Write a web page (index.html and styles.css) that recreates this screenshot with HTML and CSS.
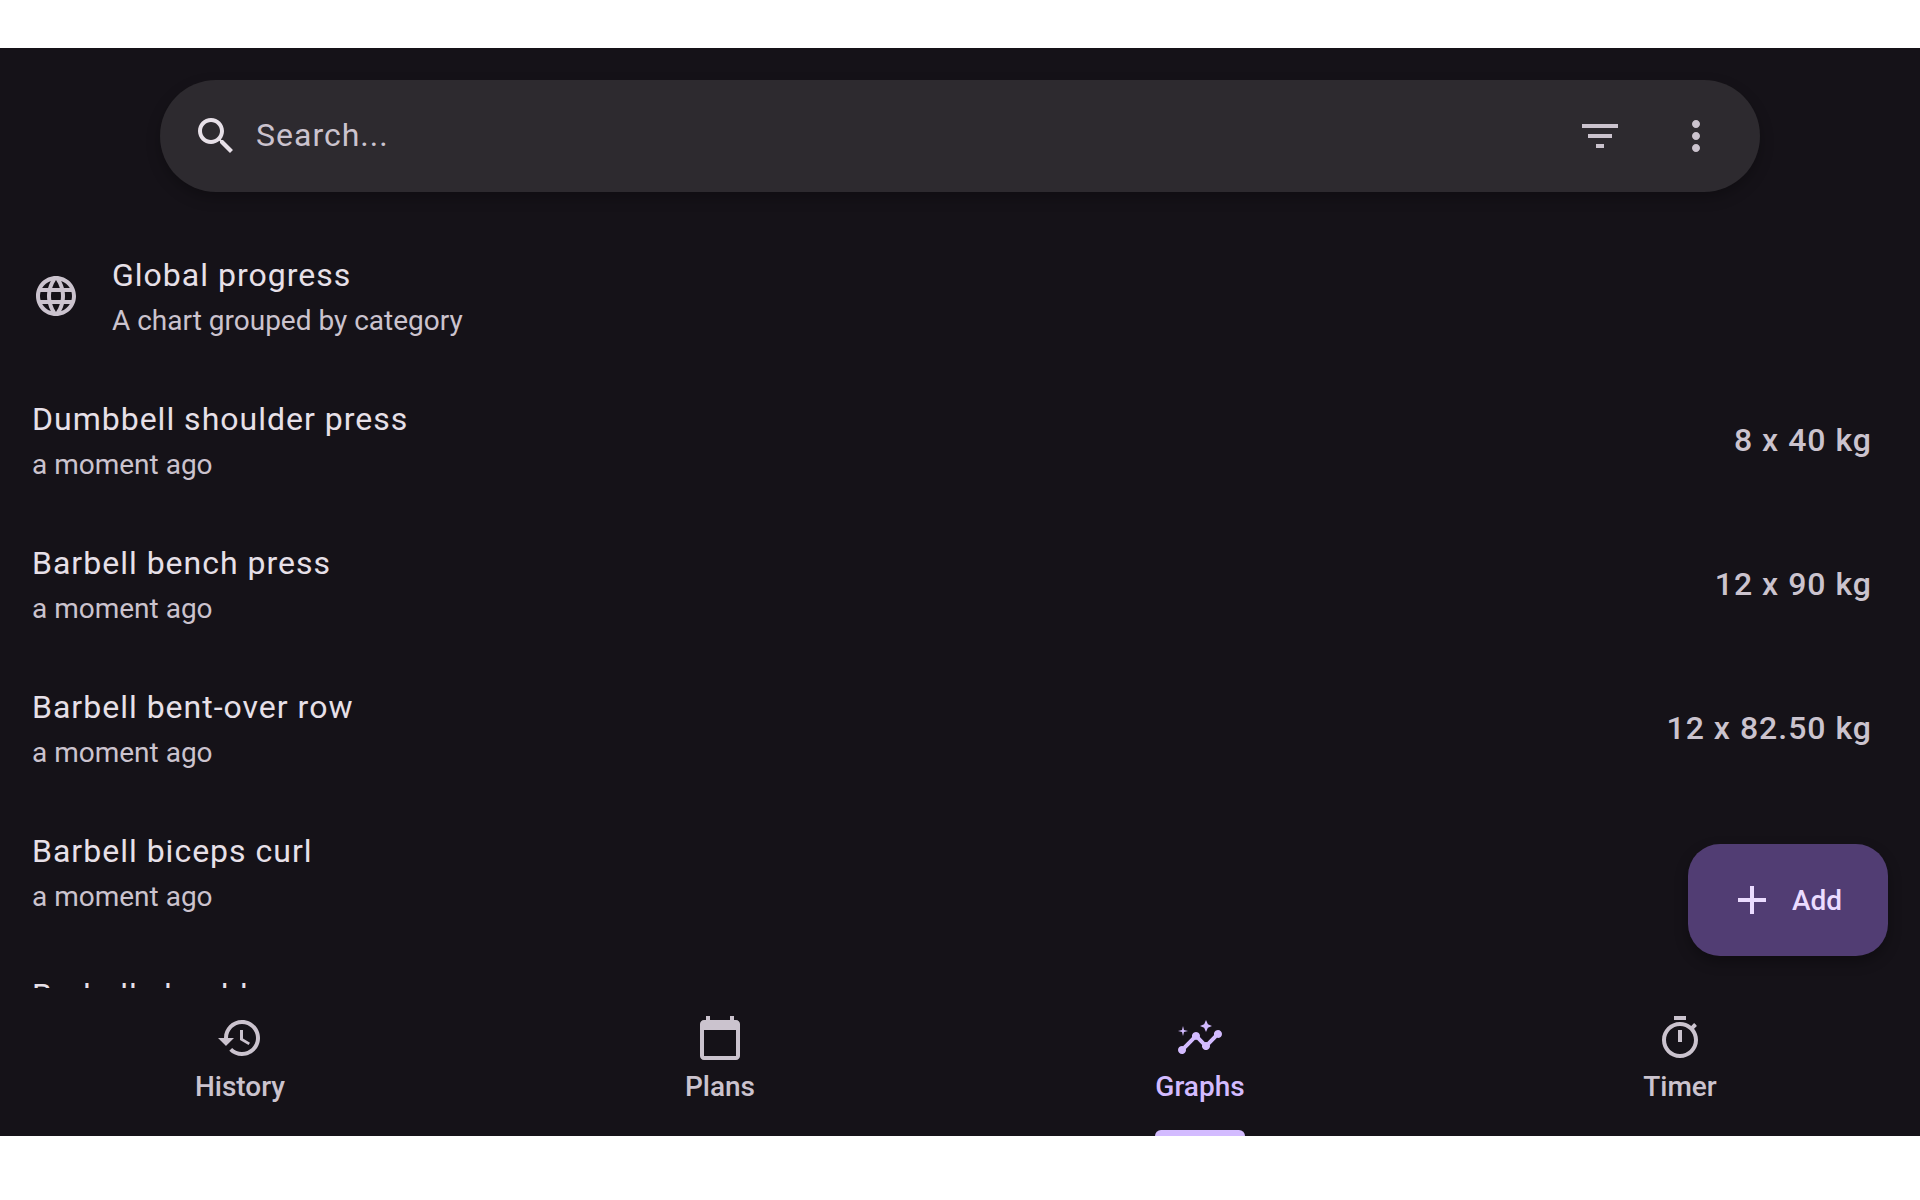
FILE: index.html
```html
<!DOCTYPE html>
<html lang="en">
<head>
<meta charset="utf-8">
<meta name="viewport" content="width=device-width, initial-scale=1">
<title>Graphs</title>
<link rel="stylesheet" href="styles.css">
</head>
<body>
<div class="app">
  <header class="top">
    <form class="search" role="search">
      <label class="search-label" for="q" aria-label="Search">
        <svg class="icon" viewBox="0 0 24 24"><path d="M15.5 14h-.79l-.28-.27C15.41 12.59 16 11.11 16 9.5 16 5.91 13.09 3 9.5 3S3 5.91 3 9.5 5.91 16 9.5 16c1.61 0 3.09-.59 4.23-1.57l.27.28v.79l5 4.99L20.49 19l-4.99-5zm-6 0C7.01 14 5 11.99 5 9.5S7.01 5 9.5 5 14 7.01 14 9.5 11.99 14 9.5 14z"/></svg>
      </label>
      <input class="search-input" id="q" type="text" placeholder="Search...">
      <button class="icon-button" type="button" aria-label="Filter">
        <svg class="icon" viewBox="0 0 24 24"><path d="M10 18h4v-2h-4v2zM3 6v2h18V6H3zm3 7h12v-2H6v2z"/></svg>
      </button>
      <button class="icon-button" type="button" aria-label="More">
        <svg class="icon" viewBox="0 0 24 24"><path d="M12 8c1.1 0 2-.9 2-2s-.9-2-2-2-2 .9-2 2 .9 2 2 2zm0 2c-1.1 0-2 .9-2 2s.9 2 2 2 2-.9 2-2-.9-2-2-2zm0 6c-1.1 0-2 .9-2 2s.9 2 2 2 2-.9 2-2-.9-2-2-2z"/></svg>
      </button>
    </form>
  </header>

  <main class="content">
    <ul class="list">
      <li class="row">
        <svg class="icon" viewBox="0 0 24 24"><path d="M11.99 2C6.47 2 2 6.48 2 12s4.47 10 9.99 10C17.52 22 22 17.52 22 12S17.52 2 11.99 2zm6.93 6h-2.95c-.32-1.25-.78-2.45-1.38-3.56 1.84.63 3.37 1.91 4.33 3.56zM12 4.04c.83 1.2 1.48 2.53 1.91 3.96h-3.82c.43-1.43 1.08-2.76 1.91-3.96zM4.26 14C4.1 13.36 4 12.69 4 12s.1-1.36.26-2h3.38c-.08.66-.14 1.32-.14 2s.06 1.34.14 2H4.26zm.82 2h2.95c.32 1.25.78 2.45 1.38 3.56-1.84-.63-3.37-1.9-4.33-3.56zm2.95-8H5.08c.96-1.66 2.49-2.93 4.33-3.56C8.81 5.55 8.35 6.75 8.03 8zM12 19.96c-.83-1.2-1.48-2.53-1.91-3.96h3.82c-.43 1.43-1.08 2.76-1.91 3.96zM14.34 14H9.66c-.09-.66-.16-1.32-.16-2s.07-1.35.16-2h4.68c.09.65.16 1.32.16 2s-.07 1.34-.16 2zm.25 5.56c.6-1.11 1.06-2.31 1.38-3.56h2.95c-.96 1.65-2.49 2.93-4.33 3.56zM16.36 14c.08-.66.14-1.32.14-2s-.06-1.34-.14-2h3.38c.16.64.26 1.31.26 2s-.1 1.36-.26 2h-3.38z"/></svg>
        <div class="row-text">
          <div class="row-title">Global progress</div>
          <div class="row-subtitle">A chart grouped by category</div>
        </div>
      </li>
      <li class="row">
        <div class="row-text">
          <div class="row-title">Dumbbell shoulder press</div>
          <div class="row-subtitle">a moment ago</div>
        </div>
        <div class="row-value">8 x 40 kg</div>
      </li>
      <li class="row">
        <div class="row-text">
          <div class="row-title">Barbell bench press</div>
          <div class="row-subtitle">a moment ago</div>
        </div>
        <div class="row-value">12 x 90 kg</div>
      </li>
      <li class="row">
        <div class="row-text">
          <div class="row-title">Barbell bent-over row</div>
          <div class="row-subtitle">a moment ago</div>
        </div>
        <div class="row-value">12 x 82.50 kg</div>
      </li>
      <li class="row">
        <div class="row-text">
          <div class="row-title">Barbell biceps curl</div>
          <div class="row-subtitle">a moment ago</div>
        </div>
      </li>
      <li class="row">
        <div class="row-text">
          <div class="row-title">Barbell shoulder press</div>
        </div>
      </li>
    </ul>
    <button class="fab" type="button">
      <svg class="icon" viewBox="0 0 24 24"><path d="M19 13h-6v6h-2v-6H5v-2h6V5h2v6h6v2z"/></svg>
      Add
    </button>
  </main>

  <nav class="tabs">
    <a class="tab" href="#history">
      <svg class="icon" viewBox="0 0 24 24"><path d="M13 3c-4.97 0-9 4.03-9 9H1l3.89 3.89.07.14L9 12H6c0-3.87 3.13-7 7-7s7 3.13 7 7-3.13 7-7 7c-1.93 0-3.68-.79-4.94-2.06l-1.42 1.42C8.27 19.99 10.51 21 13 21c4.97 0 9-4.03 9-9s-4.03-9-9-9zm-1 5v5l4.28 2.54.72-1.21-3.5-2.08V8H12z"/></svg>
      <span class="tab-label">History</span>
    </a>
    <a class="tab" href="#plans">
      <svg class="icon" viewBox="0 0 24 24"><path d="M20 3h-1V1h-2v2H7V1H5v2H4c-1.1 0-2 .9-2 2v16c0 1.1.9 2 2 2h16c1.1 0 2-.9 2-2V5c0-1.1-.9-2-2-2zm0 18H4V8h16v13z"/></svg>
      <span class="tab-label">Plans</span>
    </a>
    <a class="tab tab-active" href="#graphs" aria-current="page">
      <svg class="icon" viewBox="0 0 24 24"><path d="M21 8c-1.45 0-2.26 1.44-1.93 2.51l-3.55 3.56c-.3-.09-.74-.09-1.04 0l-2.55-2.55C12.27 10.45 11.46 9 10 9c-1.45 0-2.27 1.44-1.93 2.52l-4.56 4.55C2.44 15.74 1 16.55 1 18c0 1.1.9 2 2 2 1.45 0 2.26-1.44 1.93-2.51l4.55-4.56c.3.09.74.09 1.04 0l2.55 2.55C12.73 16.55 13.54 18 15 18c1.45 0 2.27-1.44 1.93-2.52l3.56-3.55C21.56 12.26 23 11.45 23 10c0-1.1-.9-2-2-2z"/><path d="M15 9l.94-2.07L18 6l-2.06-.93L15 3l-.92 2.07L12 6l2.08.93zM3.5 11L4 9l2-.5L4 8l-.5-2L3 8l-2 .5L3 9z"/></svg>
      <span class="tab-label">Graphs</span>
    </a>
    <a class="tab" href="#timer">
      <svg class="icon" viewBox="0 0 24 24"><path d="M15 1H9v2h6V1zm-4 13h2V8h-2v6zm8.03-6.61l1.42-1.42c-.43-.51-.9-.99-1.41-1.41l-1.42 1.42C16.07 4.74 14.12 4 12 4c-4.97 0-9 4.03-9 9s4.02 9 9 9 9-4.03 9-9c0-2.12-.74-4.07-1.97-5.61zM12 20c-3.87 0-7-3.13-7-7s3.13-7 7-7 7 3.13 7 7-3.13 7-7 7z"/></svg>
      <span class="tab-label">Timer</span>
    </a>
  </nav>
</div>
</body>
</html>
```
FILE: styles.css
```css
:root {
  --surface: #151218;
  --search: #2d2a2f;
  --text: #e7e0e8;
  --muted: #cbc3ce;
  --primary: #d3bbff;
  --fab: #513d73;
  --on-fab: #ebdcff;
}

* {
  box-sizing: border-box;
}

body {
  margin: 0;
  height: 100vh;
  padding: 48px 0 64px;
  background: #fff;
  font-family: Roboto, "Liberation Sans", sans-serif;
  color: var(--text);
}

button {
  font: inherit;
  border: 0;
  cursor: pointer;
}

.app {
  display: flex;
  flex-direction: column;
  height: 100%;
  background: var(--surface);
}

.icon {
  display: block;
  flex: none;
  width: 48px;
  height: 48px;
  fill: currentColor;
}

.top {
  padding: 32px 32px 0;
}

.search {
  display: flex;
  align-items: center;
  max-width: 1600px;
  height: 112px;
  margin: 0 auto;
  padding: 0 16px 0 32px;
  border-radius: 56px;
  background: var(--search);
  box-shadow: 0 6px 14px rgba(0, 0, 0, 0.25);
}

.search-input {
  flex: 1;
  min-width: 0;
  height: 50px;
  margin: 0;
  padding: 0 16px 2px;
  border: 0;
  outline: 0;
  background: none;
  color: var(--text);
  font: 400 32px/48px Roboto, "Liberation Sans", sans-serif;
  letter-spacing: 1px;
}

.search-input::placeholder {
  color: var(--muted);
  opacity: 1;
}

.icon-button {
  display: grid;
  place-items: center;
  width: 96px;
  height: 96px;
  padding: 0;
  background: none;
  color: var(--muted);
}

.content {
  position: relative;
  flex: 1;
  min-height: 0;
  padding-top: 32px;
  overflow: hidden;
}

.list {
  margin: 0;
  padding: 0;
  list-style: none;
}

.row {
  display: flex;
  align-items: center;
  gap: 32px;
  min-height: 144px;
  padding: 26px 48px 26px 32px;
  color: var(--muted);
}

.row-text {
  flex: 1;
  align-self: flex-start;
}

.row-title {
  color: var(--text);
  font-size: 32px;
  line-height: 50px;
  letter-spacing: 1px;
}

.row-subtitle {
  font-size: 28px;
  line-height: 42px;
}

.row-value {
  font-size: 32px;
  font-weight: 500;
  line-height: 48px;
  letter-spacing: 1px;
}

.fab {
  position: absolute;
  right: 32px;
  bottom: 32px;
  display: flex;
  align-items: center;
  gap: 16px;
  height: 112px;
  padding: 0 46px 0 40px;
  border-radius: 32px;
  background: var(--fab);
  color: var(--on-fab);
  box-shadow: 0 6px 14px rgba(0, 0, 0, 0.3);
  font-size: 28px;
  font-weight: 500;
}

.tabs {
  display: flex;
}

.tab {
  display: flex;
  flex: 1;
  flex-direction: column;
  align-items: center;
  gap: 5px;
  padding-top: 26px;
  color: var(--muted);
  text-decoration: none;
}

.tab-label {
  font-size: 28px;
  font-weight: 500;
  line-height: 40px;
}

.tab-label::after {
  content: "";
  display: block;
  height: 6px;
  margin-top: 23px;
  border-radius: 6px 6px 0 0;
}

.tab-active {
  color: var(--primary);
}

.tab-active .tab-label::after {
  background: var(--primary);
}
```
